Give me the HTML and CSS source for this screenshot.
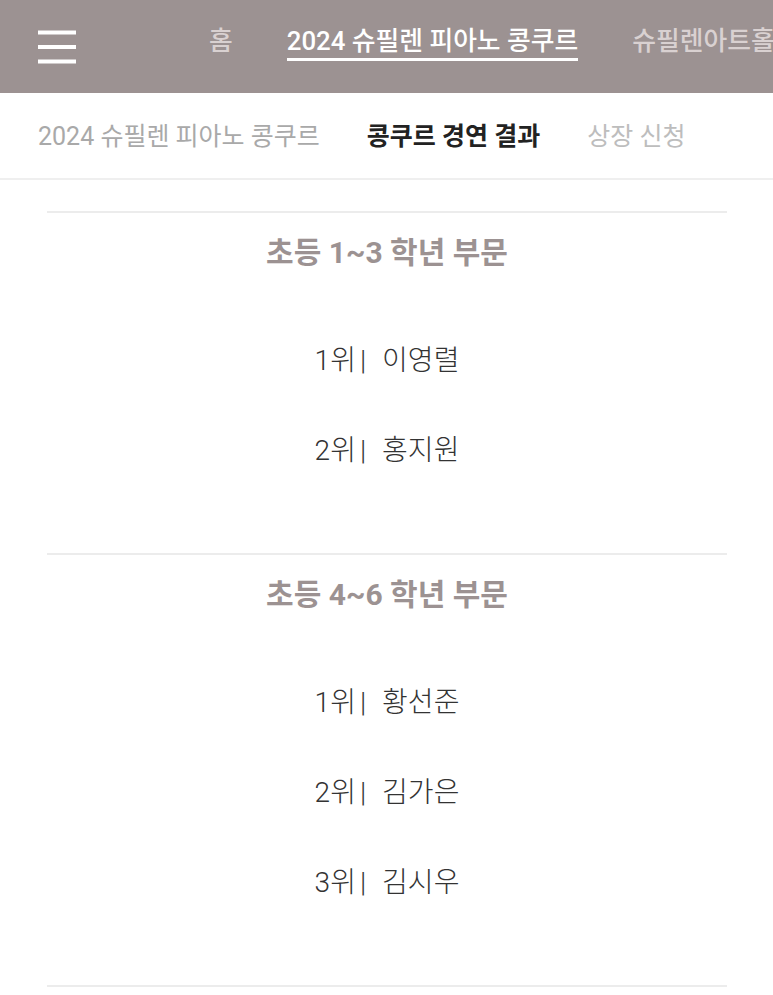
FILE: index.html
```html
<!DOCTYPE html>
<html lang="ko">
<head>
<meta charset="utf-8">
<link rel="stylesheet" href="styles.css">
</head>
<body>
<header class="topbar">
  <div class="menu-btn" aria-label="menu">
    <svg width="38" height="34" viewBox="0 0 38 34"><rect x="0" y="0.5" width="38" height="4" fill="#fff"/><rect x="0" y="15" width="38" height="4" fill="#fff"/><rect x="0" y="29.5" width="38" height="4" fill="#fff"/></svg>
  </div>
  <nav class="gnb">
    <a class="gnb-item">홈</a>
    <a class="gnb-item active">2024 슈필렌 피아노 콩쿠르</a>
    <a class="gnb-item">슈필렌아트홀</a>
  </nav>
</header>
<nav class="subnav">
  <a class="sub-item">2024 슈필렌 피아노 콩쿠르</a>
  <a class="sub-item active">콩쿠르 경연 결과</a>
  <a class="sub-item light">상장 신청</a>
</nav>
<main class="content">
  <section class="division">
    <h2 class="division-title">초등 1~3 학년 부문</h2>
    <ul class="ranks">
      <li class="rank">1위<span class="bar">|</span>이영렬</li>
      <li class="rank">2위<span class="bar">|</span>홍지원</li>
    </ul>
  </section>
  <section class="division">
    <h2 class="division-title">초등 4~6 학년 부문</h2>
    <ul class="ranks">
      <li class="rank">1위<span class="bar">|</span>황선준</li>
      <li class="rank">2위<span class="bar">|</span>김가은</li>
      <li class="rank">3위<span class="bar">|</span>김시우</li>
    </ul>
  </section>
  <section class="division"></section>
</main>
</body>
</html>
```
FILE: styles.css
```css
* { box-sizing: border-box; }
html, body { margin: 0; padding: 0; }
body {
  background: #fff;
  font-family: Roboto, "Noto Sans CJK KR", sans-serif;
  width: 773px;
  overflow: hidden;
}
.topbar {
  height: 93px;
  background: #9c9292;
  display: flex;
  align-items: center;
  white-space: nowrap;
  overflow: hidden;
}
.menu-btn {
  width: 38px;
  margin-left: 38px;
  height: 34px;
  flex: none;
}
.menu-btn svg { display: block; }
.gnb {
  display: flex;
  align-items: flex-start;
  margin-left: 133px;
  gap: 54px;
  padding-bottom: 6px;
}
.gnb-item {
  font-size: 25.8px;
  color: #d9d1d1;
  font-weight: 500;
  line-height: 30px;
  padding-bottom: 2px;
  border-bottom: 3px solid transparent;
}
.gnb-item.active {
  color: #fff;
  border-bottom-color: #fff;
}
.subnav {
  height: 87px;
  display: flex;
  align-items: center;
  padding-left: 38px;
  padding-bottom: 4px;
  gap: 47px;
  border-bottom: 2px solid #efefef;
  white-space: nowrap;
}
.sub-item {
  font-size: 25px;
  color: #a9a9a9;
  font-weight: 400;
}
.sub-item.active { color: #222; font-weight: 700; }
.sub-item.light { color: #bdbdbd; }
.content {
  padding: 31px 46px 0 47px;
}
.division {
  border-top: 2px solid #ececec;
  padding-bottom: 30px;
}
.division-title {
  margin: 0;
  padding-top: 22px;
  text-align: center;
  font-size: 30px;
  font-weight: 700;
  color: #9c9292;
  line-height: 36px;
}
.ranks {
  list-style: none;
  margin: 0;
  padding: 72px 0 0;
}
.rank {
  text-align: center;
  font-size: 28px;
  line-height: 36px;
  color: #333;
  font-weight: 300;
  margin-bottom: 54px;
}
.bar { margin: 0 16px 0 4px; }
```
